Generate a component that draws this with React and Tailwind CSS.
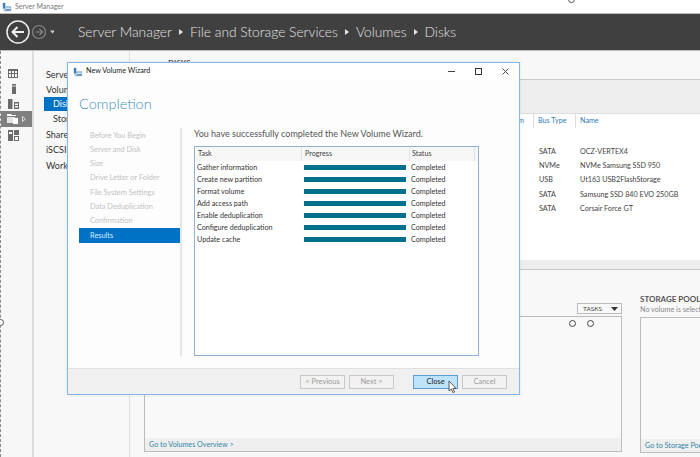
const font = { fontFamily: 'Lato, "Noto Sans", sans-serif' }

const navItems = [
  { label: 'Servers', cls: 'pl-[12px] h-[15px]' },
  { label: 'Volumes', cls: 'pl-[12px] h-[15px]' },
  { label: 'Disks', cls: 'pl-[9px] h-[14px] ml-[10px] bg-[#0072c6] text-white' },
  { label: 'Storage Pools', cls: 'pl-[19px] h-[16px]' },
  { label: 'Shares', cls: 'pl-[12px] h-[15px]' },
  { label: 'iSCSI', cls: 'pl-[12px] h-[16px]' },
  { label: 'Work Folders', cls: 'pl-[12px] h-[15px]' },
]

const disks = [
  ['SATA', 'OCZ-VERTEX4'],
  ['NVMe', 'NVMe Samsung SSD 950'],
  ['USB', 'Ut163 USB2FlashStorage'],
  ['SATA', 'Samsung SSD 840 EVO 250GB'],
  ['SATA', 'Corsair Force GT'],
]

const steps = [
  'Before You Begin',
  'Server and Disk',
  'Size',
  'Drive Letter or Folder',
  'File System Settings',
  'Data Deduplication',
  'Confirmation',
]

const tasks = [
  'Gather information',
  'Create new partition',
  'Format volume',
  'Add access path',
  'Enable deduplication',
  'Configure deduplication',
  'Update cache',
]

function AppIcon({ className }) {
  return (
    <svg className={className} viewBox="0 0 12 12">
      <rect x="1" y="1" width="3" height="7" fill="#3f7fb5" />
      <path d="M4 5h7v6H2V9h2z" fill="#8db7d8" />
      <rect x="5" y="7" width="5" height="1" fill="#ffffff" />
      <rect x="5" y="9" width="5" height="1" fill="#4a6f8f" />
    </svg>
  )
}

function SideIcon({ kind }) {
  if (kind === 'dash') {
    return (
      <svg className="w-[12px] h-[10px]" viewBox="0 0 12 10" fill="#6b6b6b">
        <path d="M0 0h10v9H0zM1 2v2h2V2zm3 0v2h2V2zm3 0v2h2V2zM1 5v3h2V5zm3 0v3h2V5zm3 0v3h2V5z" fillRule="evenodd" />
      </svg>
    )
  }
  if (kind === 'info') {
    return (
      <svg className="w-[12px] h-[10px]" viewBox="0 0 12 10" fill="#6b6b6b">
        <rect x="4" y="0" width="4" height="1.6" />
        <rect x="4" y="2.4" width="4" height="7.6" />
      </svg>
    )
  }
  if (kind === 'all') {
    return (
      <svg className="w-[12px] h-[10px]" viewBox="0 0 12 10" fill="#6b6b6b">
        <path d="M0 0h4.5v10H0zM6 3h5v7H6zM7 4.5v1.5h3V4.5zM7 7v1.5h3V7z" fillRule="evenodd" />
      </svg>
    )
  }
  if (kind === 'files') {
    return (
      <svg className="w-[12px] h-[10px]" viewBox="0 0 12 10">
        <path d="M0 0h4l1 1h4v1H0z" fill="#ffffff" />
        <path d="M0 3h8v6H0z" fill="#e4e4e4" />
        <path d="M6 4h5v6H6z" fill="#ffffff" />
      </svg>
    )
  }
  return (
    <svg className="w-[12px] h-[11px]" viewBox="0 0 12 11" fill="#6b6b6b">
      <path d="M0 0h5v11H0zM1 2v2h3V2zM6 0h5v5H6zM6 6h5v5H6zM7 7v3h3V7z" fillRule="evenodd" />
    </svg>
  )
}

function Sidebar() {
  return (
    <div className="w-[34px] shrink-0 bg-[#f7f7f7] border-r-2 border-[#dcdcdc]">
      <div className="h-full pt-[15px] border-l border-dashed border-[#8a8a8a]">
        <div className="h-[15px] flex items-center justify-center pr-[5px]"><SideIcon kind="dash" /></div>
        <div className="h-[16px] flex items-center justify-center pr-[5px]"><SideIcon kind="info" /></div>
        <div className="h-[14px] flex items-center justify-center pr-[5px]"><SideIcon kind="all" /></div>
        <div className="h-[16px] bg-[#7f7f7f] flex items-center justify-center gap-[3px]">
          <SideIcon kind="files" />
          <svg className="w-[4px] h-[6px]" viewBox="0 0 4 6"><path d="M0.5 0.5L3.5 3L0.5 5.5z" fill="none" stroke="#ffffff" strokeWidth="0.7" /></svg>
        </div>
        <div className="h-[16px] flex items-center justify-center pr-[5px]"><SideIcon kind="tools" /></div>
      </div>
    </div>
  )
}

function Nav() {
  return (
    <div className="w-[96px] shrink-0 bg-[#f8f8f8] border-r border-[#dedede] pt-[16px] text-[9px] text-[#333]">
      {navItems.map((item) => (
        <div key={item.label} className={`flex items-center whitespace-nowrap ${item.cls}`}>{item.label}</div>
      ))}
    </div>
  )
}

function MainPane() {
  return (
    <div className="flex-1 min-w-0 bg-[#f8f8f8] flex flex-col overflow-hidden">
      <div className="h-[28px] flex pl-[16px] pt-[6px] gap-[8px] text-[8px] font-bold text-[#555]">
        <div className="w-[14px] h-[6px] mt-[6px] bg-[#d5d5d5]" />
        <span>DISKS</span>
      </div>
      <div className="h-[34px] bg-[#eeeeee] border-t border-[#c9c9c9]" />
      <div className="h-[15px] bg-white flex text-[7.2px] text-[#2f7cb5] items-center border-t border-[#dddddd]">
        <div className="w-[404px] h-full flex items-center justify-end pr-[9px] border-r border-[#dddddd]">Subsystem</div>
        <div className="w-[42px] h-full flex items-center pl-[4px] whitespace-nowrap border-r border-[#dddddd]">Bus Type</div>
        <div className="pl-[4px]">Name</div>
      </div>
      <div className="h-[132px] bg-white pt-[17px] text-[7.2px] text-[#444]">
        {disks.map((d) => (
          <div key={d[1]} className="flex h-[14.3px] items-center">
            <div className="w-[409px] shrink-0" />
            <div className="w-[41px] shrink-0">{d[0]}</div>
            <div className="whitespace-nowrap">{d[1]}</div>
          </div>
        ))}
      </div>
      <div className="h-[10px] bg-[#eeeeee] border-b border-[#c9c9c9]" />
      <div className="flex-1 flex pl-[14px] gap-[18px] min-h-0">
        <div className="w-[478px] shrink-0 flex flex-col pt-[33px]">
          <div className="flex justify-end">
            <div className="w-[45px] h-[11px] border border-[#bcbcbc] bg-[#f8f8f8] flex items-center justify-between pl-[5px] pr-[3px] text-[6.5px] text-[#444]">
              <span>TASKS</span>
              <svg className="w-[7px] h-[4px]" viewBox="0 0 7 4"><path d="M0 0h7L3.5 4z" fill="#333" /></svg>
            </div>
          </div>
          <div className="relative mt-[2px] h-[136px] border border-[#bcbcbc] bg-[#f9f9f9] flex flex-col justify-end">
            <span className="absolute left-[424px] top-[3px] w-[7px] h-[7px] rounded-full border border-[#444]" />
            <span className="absolute left-[442px] top-[3px] w-[7px] h-[7px] rounded-full border border-[#444]" />
            <div className="h-[13px] bg-[#efefef] pl-[4px] text-[7.2px] leading-[13px] text-[#2f86a8]">Go to Volumes Overview &gt;</div>
          </div>
        </div>
        <div className="w-[60px] shrink-0 flex flex-col pt-[24px]">
          <div className="text-[8px] leading-[11px] font-bold text-[#555] whitespace-nowrap overflow-hidden">STORAGE POOLS</div>
          <div className="text-[7.2px] leading-[10px] text-[#888] whitespace-nowrap overflow-hidden">No volume is selected.</div>
          <div className="mt-[2px] h-[136px] border border-[#bcbcbc] border-r-0 bg-[#f9f9f9] flex flex-col justify-end">
            <div className="h-[13px] bg-[#efefef] pl-[4px] text-[7.2px] leading-[13px] text-[#2f86a8] whitespace-nowrap overflow-hidden">Go to Storage Pools Overview &gt;</div>
          </div>
        </div>
      </div>
    </div>
  )
}

function WizardButton({ children, primary }) {
  return (
    <div
      className={`w-[45px] h-[14px] flex items-center justify-center text-[7.5px] border ${
        primary ? 'bg-[#bfe3fb] border-[#5a9fd4] text-[#222]' : 'bg-[#f2f2f2] border-[#c8c8c8] text-[#9a9a9a]'
      }`}
    >
      {children}
    </div>
  )
}

function Wizard() {
  return (
    <div className="absolute left-[67px] top-[62px] w-[453px] h-[333px] bg-[#fdfdfd] border border-[#84b8e8] flex flex-col shadow-[0_0_4px_rgba(0,0,0,0.08)]">
      <div className="h-[17px] shrink-0 bg-white flex items-center pl-[5px] text-[7.2px] text-[#222]">
        <AppIcon className="w-[10px] h-[10px]" />
        <span className="ml-[3px]">New Volume Wizard</span>
        <div className="ml-auto flex items-center gap-[20px] pr-[10px]">
          <svg className="w-[7px] h-[7px]" viewBox="0 0 7 7"><path d="M0 3.5h7" stroke="#444" strokeWidth="1" /></svg>
          <svg className="w-[7px] h-[7px]" viewBox="0 0 7 7"><rect x="0.5" y="0.5" width="6" height="6" fill="none" stroke="#333" /></svg>
          <svg className="w-[7px] h-[7px]" viewBox="0 0 7 7"><path d="M0.5 0.5l6 6M6.5 0.5l-6 6" stroke="#333" strokeWidth="0.9" /></svg>
        </div>
      </div>
      <div className="flex-1 min-h-0 flex flex-col pl-[11px]">
        <div className="h-[48px] shrink-0 text-[14.5px] font-light leading-[48px] text-[#3f8fb5]">Completion</div>
        <div className="flex-1 min-h-0 flex pb-[12px]">
          <div className="w-[103px] shrink-0 border-r-2 border-[#e6e6e6]">
            {steps.map((s) => (
              <div key={s} className="h-[14.3px] pl-[11px] flex items-center text-[7.4px] text-[#c2c2c2] whitespace-nowrap">{s}</div>
            ))}
            <div className="h-[15px] pl-[11px] flex items-center text-[7.4px] bg-[#0072c6] text-[#d8ecfa]">Results</div>
          </div>
          <div className="flex-1 min-w-0 pl-[12px] flex flex-col">
            <div className="h-[18px] shrink-0 pt-[1px] text-[9px] leading-[10px] text-[#555] whitespace-nowrap">You have successfully completed the New Volume Wizard.</div>
            <div className="w-[285px] h-[211px] border border-[#8fb1d4] bg-white">
              <div className="h-[14px] bg-[#f7f7f7] flex text-[7.2px] leading-[14px] text-[#444]">
                <div className="w-[107px] pl-[3px] border-r border-[#e2e2e2]">Task</div>
                <div className="w-[108px] pl-[3px] border-r border-[#e2e2e2]">Progress</div>
                <div className="w-[65px] pl-[2px] border-r border-[#e2e2e2]">Status</div>
              </div>
              <div className="pt-[1px]">
                {tasks.map((t) => (
                  <div key={t} className="h-[12px] flex items-center text-[7.2px] text-[#333]">
                    <div className="w-[109px] pl-[2px] whitespace-nowrap">{t}</div>
                    <div className="w-[102px] h-[5px] mb-[1px] bg-[#00708f]" />
                    <div className="pl-[5px]">Completed</div>
                  </div>
                ))}
              </div>
            </div>
          </div>
        </div>
      </div>
      <div className="h-[26px] shrink-0 bg-[#f0f0f0] border-t border-[#e0e0e0] flex items-center pl-[232px]">
        <WizardButton>&lt; Previous</WizardButton>
        <div className="w-[4px]" />
        <WizardButton>Next &gt;</WizardButton>
        <div className="w-[19px]" />
        <WizardButton primary>Close</WizardButton>
        <div className="w-[4px]" />
        <WizardButton>Cancel</WizardButton>
      </div>
    </div>
  )
}

function Crumb() {
  return (
    <svg className="w-[4px] h-[6px] mx-[7px] shrink-0" viewBox="0 0 4 6"><path d="M0 0l4 3-4 3z" fill="#e4e4e4" /></svg>
  )
}

export default function App() {
  return (
    <div className="relative w-[700px] h-[457px] overflow-hidden bg-white flex flex-col" style={font}>
      <div className="h-[13px] shrink-0 bg-white flex items-center pl-[2px] text-[7px] text-[#777]">
        <AppIcon className="w-[10px] h-[10px]" />
        <span className="ml-[3px]">Server Manager</span>
      </div>
      <div className="h-[38px] shrink-0 bg-[#404040] border-y border-[#bdbdbd] flex items-center text-[#e4e4e4] text-[13.8px] font-light">
        <svg className="w-[48px] h-[28px] ml-[6px] shrink-0" viewBox="0 0 48 28">
          <circle cx="12" cy="14" r="11" fill="none" stroke="#f0f0f0" strokeWidth="1.5" />
          <path d="M18 14H7M11.5 9L6.5 14l5 5" fill="none" stroke="#f0f0f0" strokeWidth="2" />
          <circle cx="33" cy="14" r="6.5" fill="none" stroke="#888" strokeWidth="1.2" />
          <path d="M29.5 14H36M33.5 11L36.5 14l-3 3" fill="none" stroke="#888" strokeWidth="1.2" />
          <path d="M44 12.5h5L46.5 15.5z" fill="#cfcfcf" />
        </svg>
        <span className="ml-[24px] whitespace-nowrap">Server Manager</span>
        <Crumb />
        <span className="whitespace-nowrap">File and Storage Services</span>
        <Crumb />
        <span className="whitespace-nowrap">Volumes</span>
        <Crumb />
        <span className="whitespace-nowrap">Disks</span>
      </div>
      <div className="flex-1 min-h-0 flex">
        <Sidebar />
        <Nav />
        <MainPane />
      </div>
      <Wizard />
      {/* stray resize handles from the screenshot tool */}
      <span className="absolute left-[568px] top-[-4px] w-[7px] h-[7px] rounded-full border border-[#555] bg-white" />
      <span className="absolute left-[-3px] top-[319px] w-[7px] h-[7px] rounded-full border border-[#555] bg-white" />
      <svg className="absolute left-[448px] top-[380px] w-[9px] h-[14px]" viewBox="0 0 9 14">
        <path d="M1 1v10l2.3-2 1.6 3.6 1.6-.7L4.9 8.4H8z" fill="#fff" stroke="#333" strokeWidth="0.8" />
      </svg>
    </div>
  )
}
